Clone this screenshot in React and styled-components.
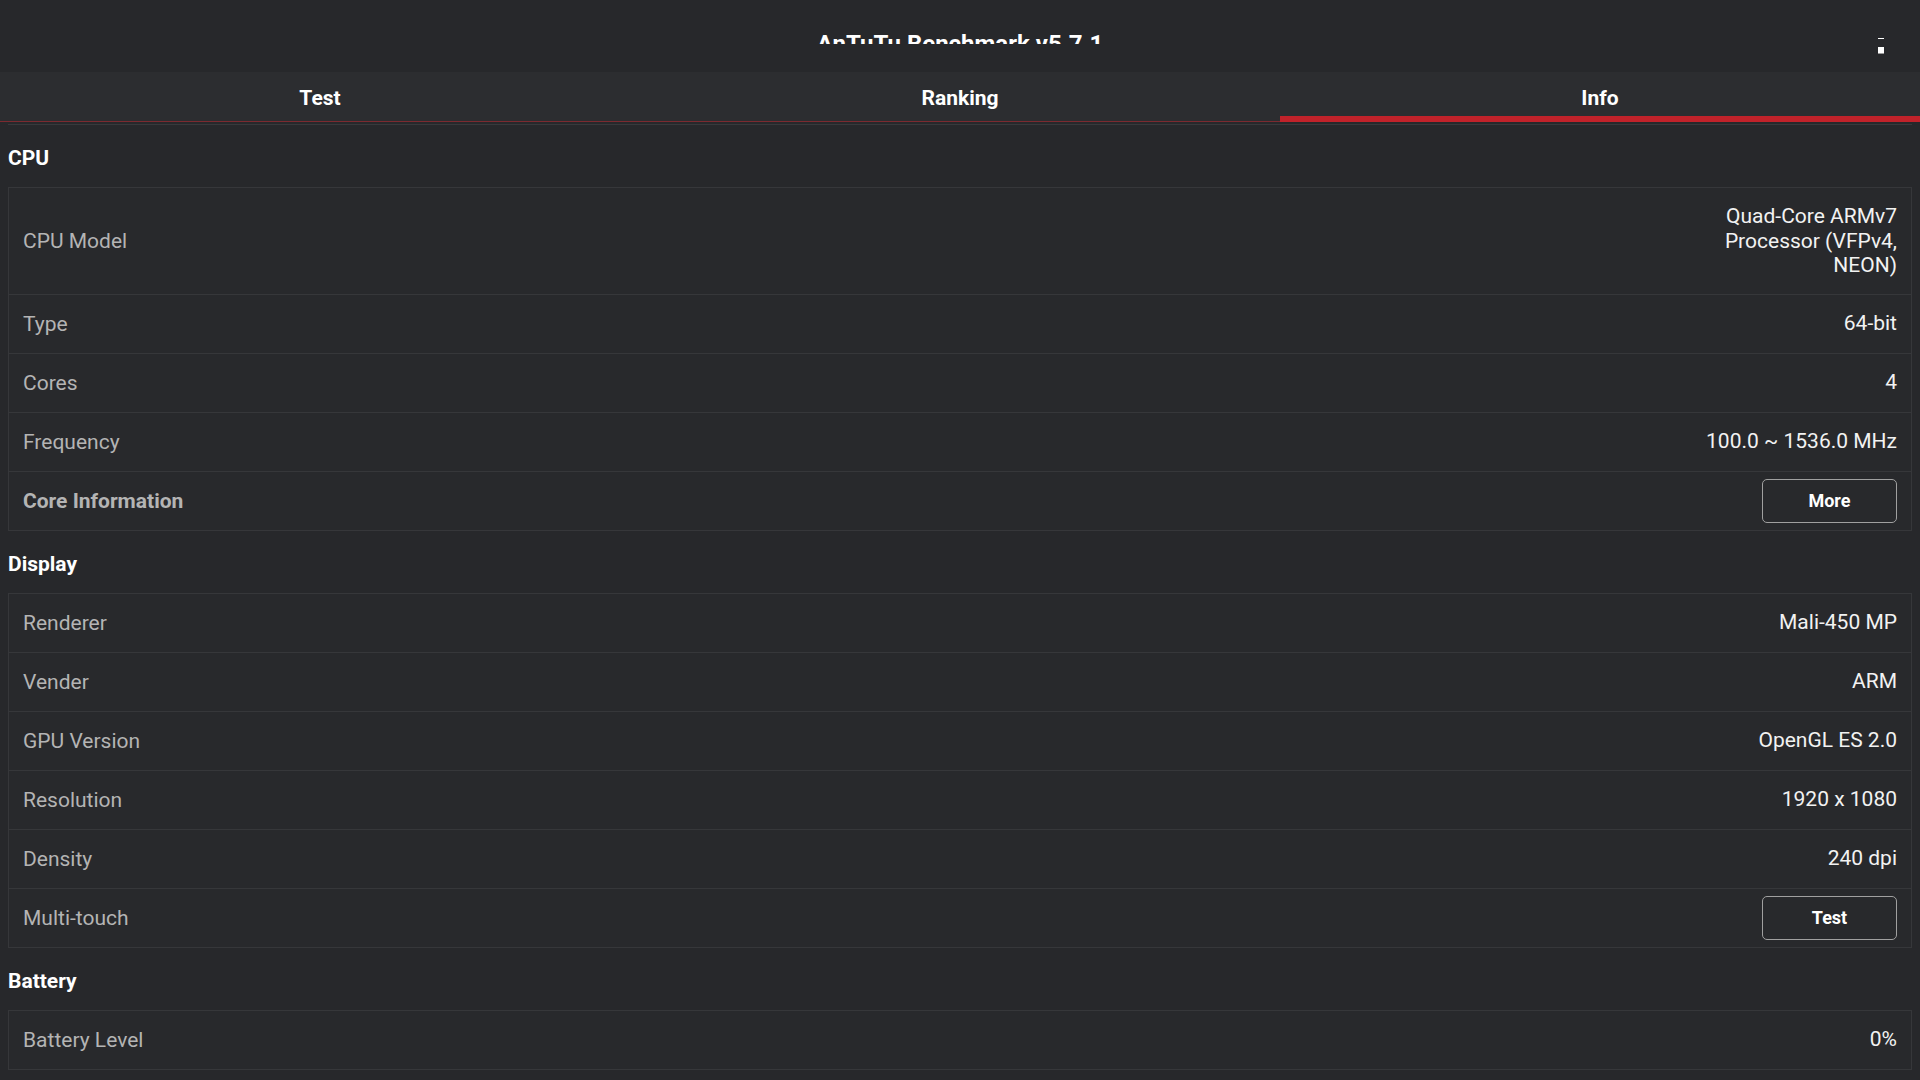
import React from "react";
import styled, { createGlobalStyle } from "styled-components";

const GlobalStyle = createGlobalStyle`
  html, body {
    margin: 0;
    padding: 0;
    background: #27282b;
    overflow: hidden;
  }
  * {
    box-sizing: border-box;
  }
`;

const sections = [
  {
    title: "CPU",
    rows: [
      { label: "CPU Model", value: ["Quad-Core ARMv7", "Processor (VFPv4,", "NEON)"] },
      { label: "Type", value: "64-bit" },
      { label: "Cores", value: "4" },
      { label: "Frequency", value: "100.0 ~ 1536.0 MHz" },
      { label: "Core Information", strong: true, button: "More" },
    ],
  },
  {
    title: "Display",
    rows: [
      { label: "Renderer", value: "Mali-450 MP" },
      { label: "Vender", value: "ARM" },
      { label: "GPU Version", value: "OpenGL ES 2.0" },
      { label: "Resolution", value: "1920 x 1080" },
      { label: "Density", value: "240 dpi" },
      { label: "Multi-touch", button: "Test" },
    ],
  },
  {
    title: "Battery",
    rows: [{ label: "Battery Level", value: "0%" }],
  },
];

const tabs = ["Test", "Ranking", "Info"];

const App = () => {
  return (
    <Screen>
      <GlobalStyle />
      <Header>
        <span />
        <TitleClip>
          <Title>AnTuTu Benchmark v5.7.1</Title>
        </TitleClip>
        <MenuButton>
          <svg width="6" height="16" viewBox="0 0 6 16">
            <rect x="0" y="0" width="6" height="1" fill="#ffffff" />
            <rect x="0" y="9" width="6" height="6" fill="#ffffff" />
            <rect x="0" y="15" width="6" height="1" fill="#9a9a9a" />
          </svg>
        </MenuButton>
      </Header>
      <TabBar>
        {tabs.map((t) => (
          <Tab key={t} active={t === "Info"}>
            {t}
          </Tab>
        ))}
      </TabBar>
      <Content>
        <CardTail />
        {sections.map((s) => (
          <Section key={s.title}>
            <SectionTitle>{s.title}</SectionTitle>
            <Card>
              {s.rows.map((r) => (
                <Row key={r.label}>
                  <Label strong={r.strong}>{r.label}</Label>
                  {r.button ? (
                    <ActionButton>{r.button}</ActionButton>
                  ) : (
                    <Value>
                      {Array.isArray(r.value)
                        ? r.value.map((line) => <div key={line}>{line}</div>)
                        : r.value}
                    </Value>
                  )}
                </Row>
              ))}
            </Card>
          </Section>
        ))}
      </Content>
    </Screen>
  );
};

const Screen = styled.div`
  height: 100vh;
  width: 100%;
  overflow: hidden;
  background: #27282b;
  font-family: Roboto, "Liberation Sans", sans-serif;
  color: #f2f2f2;
`;

const Header = styled.header`
  height: 72px;
  background: #27282b;
  display: grid;
  grid-template-columns: 1fr auto 1fr;
  align-items: start;
`;

const TitleClip = styled.div`
  margin-top: 30px;
  height: 14px;
  overflow: hidden;
`;

const Title = styled.h1`
  margin: 2px 0 0;
  font-size: 24px;
  line-height: 24px;
  font-weight: 700;
  color: #ffffff;
  white-space: nowrap;
`;

const MenuButton = styled.div`
  justify-self: end;
  margin: 38px 36px 0 0;
  display: flex;
  svg {
    display: block;
  }
`;

const TabBar = styled.nav`
  height: 50px;
  background: #2c2d30;
  display: grid;
  grid-template-columns: repeat(3, 1fr);
  border-bottom: 1px solid #7c2a30;
`;

const Tab = styled.div`
  display: flex;
  align-items: center;
  justify-content: center;
  font-size: 21px;
  font-weight: 700;
  color: #ffffff;
  padding-top: 8px;
  border-bottom: 6px solid ${(p) => (p.active ? "#c1222a" : "transparent")};
  margin-bottom: -1px;
`;

const Content = styled.main`
  padding: 0 8px;
`;

const CardTail = styled.div`
  margin-top: 2px;
  border-bottom: 1px solid #38393c;
`;

const Section = styled.section``;

const SectionTitle = styled.h2`
  margin: 0;
  padding: 19px 0 15px;
  font-size: 21px;
  line-height: 28px;
  font-weight: 700;
  color: #ffffff;
`;

const Card = styled.div`
  background: #28292c;
  border: 1px solid #36373a;
`;

const Row = styled.div`
  display: flex;
  align-items: center;
  justify-content: space-between;
  min-height: 58px;
  padding: 16px 14px;
  & + & {
    min-height: 59px;
    border-top: 1px solid #36373a;
  }
`;

const Label = styled.span`
  font-size: 21px;
  line-height: 24px;
  color: #b4b4b4;
  font-weight: ${(p) => (p.strong ? 700 : 400)};
`;

const Value = styled.div`
  font-size: 21px;
  line-height: 24.5px;
  color: #f2f2f2;
  text-align: right;
`;

const ActionButton = styled.button`
  width: 135px;
  height: 44px;
  margin: -9px 0;
  background: transparent;
  border: 1px solid #a0a0a0;
  border-radius: 5px;
  color: #ffffff;
  font-family: Roboto, "Liberation Sans", sans-serif;
  font-size: 18px;
  font-weight: 700;
  cursor: pointer;
`;

export default App;
